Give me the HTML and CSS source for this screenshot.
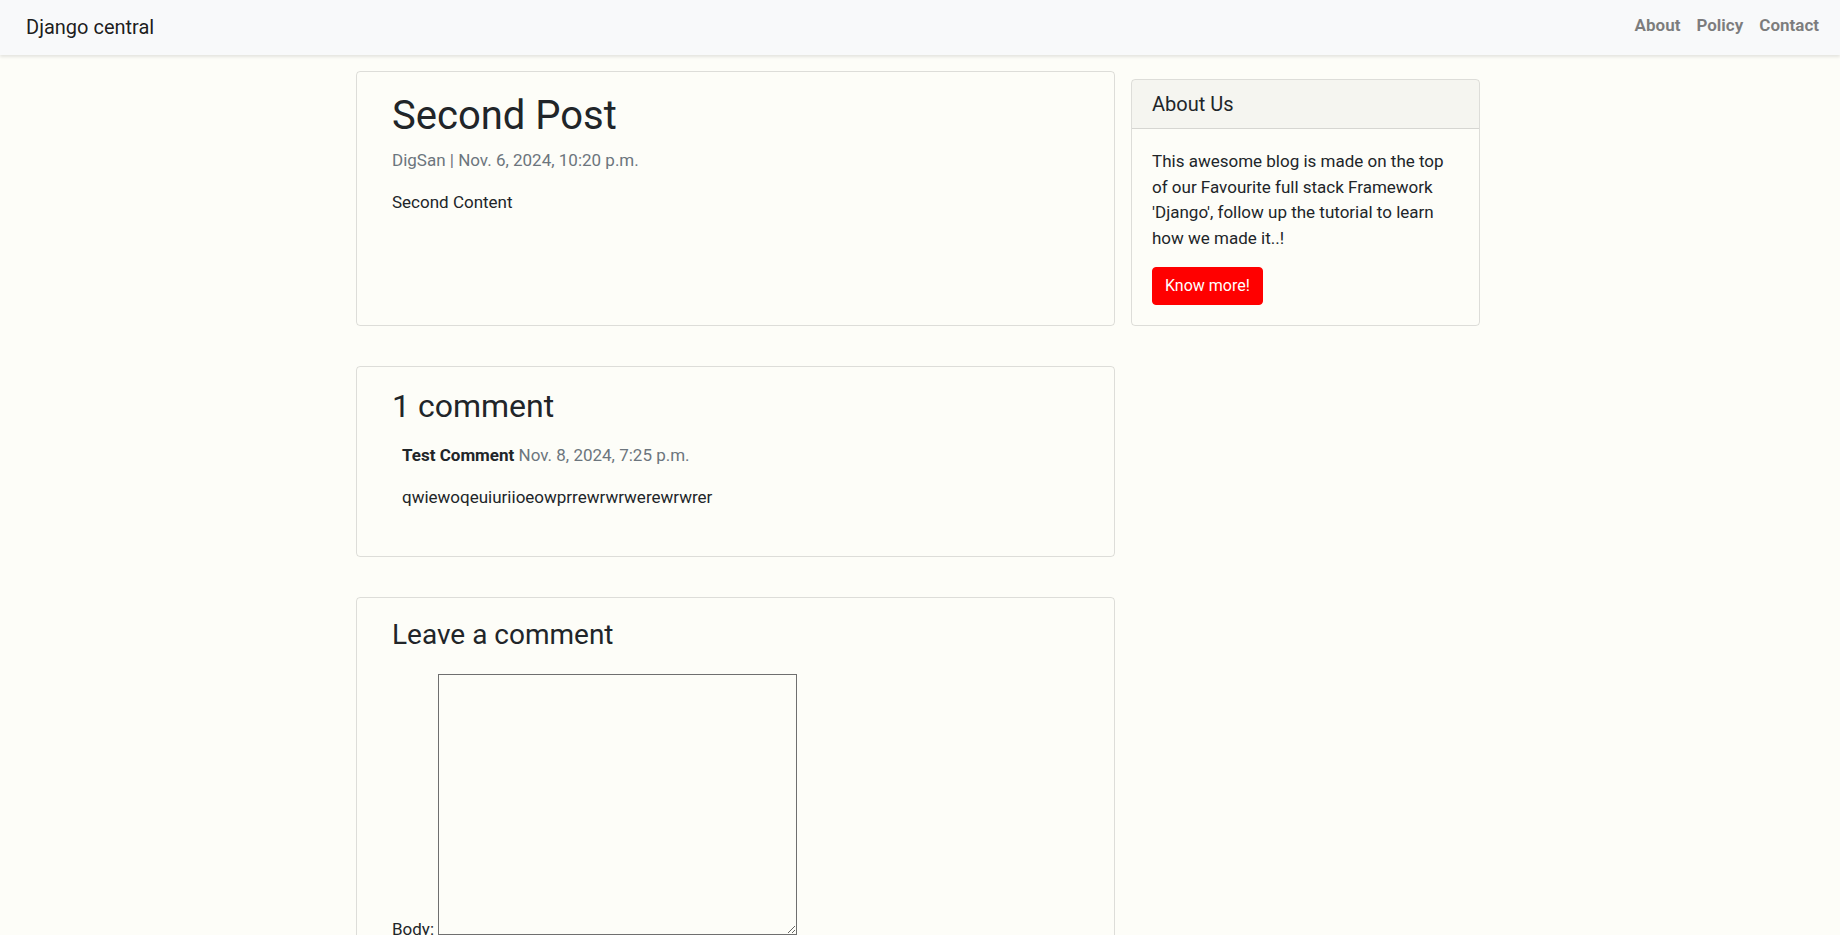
FILE: index.html
```html
<!DOCTYPE html>
<html lang="en">
<head>
<meta charset="utf-8">
<title>Second Post</title>
<link rel="stylesheet" href="styles.css">
</head>
<body>
<nav class="navbar">
  <a class="brand" href="#">Django central</a>
  <ul class="nav-links">
    <li><a class="nav-link" href="#">About</a></li>
    <li><a class="nav-link" href="#">Policy</a></li>
    <li><a class="nav-link" href="#">Contact</a></li>
  </ul>
</nav>

<main class="page">
  <article class="col-card post-card">
    <div class="card-body">
      <h1 class="post-title">Second Post</h1>
      <p class="text-muted">DigSan | Nov. 6, 2024, 10:20 p.m.</p>
      <p class="card-text">Second Content</p>
    </div>
  </article>

  <aside class="sidebar">
    <div class="card">
      <h5 class="card-header">About Us</h5>
      <div class="card-body">
        <p class="card-text">This awesome blog is made on the top of our Favourite full stack Framework 'Django', follow up the tutorial to learn how we made it..!</p>
        <a href="#" class="btn-danger">Know more!</a>
      </div>
    </div>
  </aside>

  <section class="col-card">
    <div class="card-body">
      <h2 class="section-title">1 comment</h2>
      <div class="comment">
        <p class="comment-head">Test Comment <span class="comment-date">Nov. 8, 2024, 7:25 p.m.</span></p>
        <p>qwiewoqeuiuriioeowprrewrwrwerewrwrer</p>
      </div>
    </div>
  </section>

  <section class="col-card">
    <div class="card-body">
      <h3 class="form-title">Leave a comment</h3>
      <form class="comment-form" method="post">
        <p><label for="id_body">Body:</label> <textarea name="body" cols="40" rows="10" id="id_body" class="body-input"></textarea></p>
        <button type="submit" class="btn-primary">Submit</button>
      </form>
    </div>
  </section>
</main>
</body>
</html>
```

FILE: styles.css
```css
* {
  box-sizing: border-box;
}

html {
  scrollbar-width: none;
}

html::-webkit-scrollbar {
  display: none;
}

body {
  margin: 0;
  font-family: Roboto, "Liberation Sans", sans-serif;
  font-size: 17px;
  line-height: 1.5;
  color: #212529;
  background: #fdfdf8;
}

/* Navbar */
.navbar {
  position: relative;
  display: flex;
  align-items: center;
  justify-content: space-between;
  height: 55px;
  padding: 0 13px 0 26px;
  background: #f8f9fa;
  box-shadow: 0 2px 3px rgba(0, 0, 0, 0.1);
}

.brand {
  font-size: 20px;
  line-height: 30px;
  color: rgba(0, 0, 0, 0.9);
  text-decoration: none;
  margin-bottom: 2px;
}

.nav-links {
  display: flex;
  list-style: none;
  margin: 0 0 3px;
  padding: 0;
}

.nav-link {
  display: block;
  padding: 0 8px;
  font-weight: 700;
  line-height: 25.5px;
  color: rgba(0, 0, 0, 0.5);
  text-decoration: none;
}

/* Layout */
.page {
  display: flex;
  flex-wrap: wrap;
  align-items: stretch;
  width: 1124px;
  margin-left: calc(50% - 564px);
}

.col-card {
  width: 759px;
  margin: 16px 0 24px;
  padding: 0 15px;
  border: 1px solid rgba(0, 0, 0, 0.125);
  border-radius: 4px;
}

.sidebar {
  width: 365px;
  padding-left: 16px;
}

.card {
  margin: 24px 0;
  border: 1px solid rgba(0, 0, 0, 0.125);
  border-radius: 4px;
}

.card-body {
  padding: 20px;
}

p {
  margin: 0 0 16px;
}

.post-title {
  margin: 0 0 8px;
  font-size: 40px;
  font-weight: 400;
  line-height: 1.2;
}

.section-title {
  margin: 0 0 8px;
  font-size: 32px;
  font-weight: 400;
  line-height: 1.2;
}

.form-title {
  margin: 0 0 8px;
  font-size: 28px;
  font-weight: 400;
  line-height: 1.2;
}

.text-muted {
  color: #6c757d;
}

.card-header {
  margin: 0;
  padding: 12px 20px;
  font-size: 20px;
  font-weight: 400;
  line-height: 1.2;
  background: rgba(0, 0, 0, 0.03);
  border-bottom: 1px solid rgba(0, 0, 0, 0.125);
  border-radius: 3px 3px 0 0;
}

.btn-danger {
  display: inline-block;
  padding: 6px 12px;
  font-size: 16px;
  line-height: 24px;
  color: #fff;
  background: #ff0000;
  border: 1px solid #ff0000;
  border-radius: 4px;
  text-decoration: none;
}

/* Comments */
.comment {
  padding: 10px;
}

.comment-head {
  font-weight: 700;
}

.comment-date {
  font-weight: 400;
  color: #6c757d;
}

.comment-form {
  margin-top: 1.3em;
}

.body-input {
  width: 359px;
  height: 261px;
  margin: 0;
  padding: 2px;
  font: inherit;
  color: inherit;
  background: transparent;
  border: 1px solid #6f6f6f;
}

.btn-primary {
  padding: 8px 16px;
  font: inherit;
  font-size: 20px;
  color: #fff;
  background: #007bff;
  border: 1px solid #007bff;
  border-radius: 5px;
}
```
